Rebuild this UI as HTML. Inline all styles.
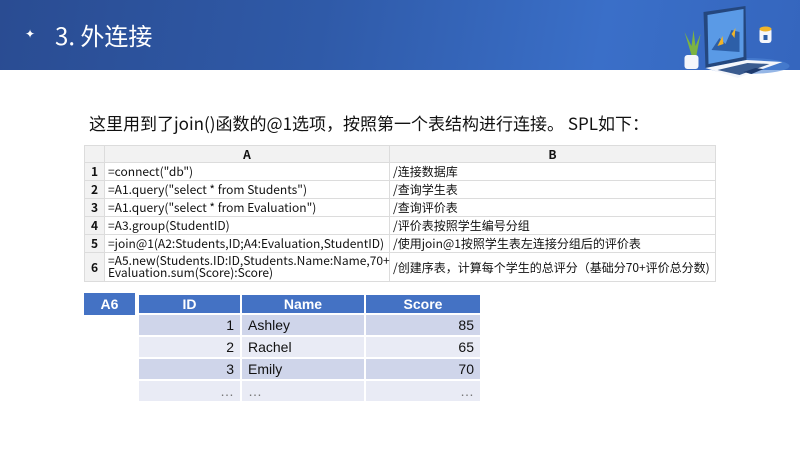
<!DOCTYPE html>
<html><head><meta charset="utf-8"><style>
*{margin:0;padding:0;box-sizing:border-box}
body{width:800px;height:450px;background:#fff;position:relative;overflow:hidden;font-family:"Liberation Sans","Noto Sans CJK SC",sans-serif}
.hdr{position:absolute;left:0;top:0;width:800px;height:70px;background:linear-gradient(100deg,#2a4c92 0%,#2f5aa8 40%,#3a6fc8 75%,#3566be 100%)}
.ttl{position:absolute;left:55px;top:17px;color:#fff;font-size:24px;font-family:"Noto Sans CJK SC",sans-serif}
.star{position:absolute;left:25px;top:27px;color:#fff;font-size:12px}
.intro{position:absolute;left:89px;top:110px;font-size:17px;font-family:"Noto Sans CJK SC",sans-serif;color:#111}
table{border-collapse:collapse;position:absolute}
.t1{left:84px;top:145px;width:632px;font-family:"Noto Sans CJK SC",sans-serif;font-size:12px;color:#111;table-layout:fixed}
.t1 td{border:1px solid #dcdcdc;padding:0 3px;height:18px;line-height:13px;white-space:nowrap;overflow:visible}
.t1 tr.h td{background:#f2f2f2;font-weight:bold;text-align:center;height:17px}
.t1 td.n{background:#f2f2f2;font-weight:bold;text-align:center;font-size:12px}
.a6{position:absolute;left:84px;top:293px;width:52px;height:22px;background:#4472c4;color:#fff;font-weight:bold;font-size:14px;text-align:center;line-height:22px;border-right:1px solid #fff}
.t2{left:137px;top:293px;width:345px;font-size:14px;color:#111}
.t2 td{border:2px solid #fff;height:22px;padding:0 6px}
.t2 tr.h td{background:#4472c4;color:#fff;font-weight:bold;text-align:center;height:20px}
.t2 tr.o td{background:#cfd5ea}
.t2 tr.e td{background:#e9ebf5}
.r{text-align:right}
</style></head><body>
<div class="hdr"></div>
<div class="star">✦</div>
<div class="ttl">3. 外连接</div>
<svg style="position:absolute;left:645px;top:0" width="155" height="78" viewBox="0 0 150 78">
<ellipse cx="100" cy="66" rx="42" ry="8" fill="#4f86d6" opacity=".6"/>
<rect x="37" y="55" width="14" height="14" rx="3" fill="#f4f6fb"/>
<path d="M44 55 L37 32 L44 46 L46 30 L48 46 L53 34 L49 55Z" fill="#7cb342"/>
<path d="M56 12 L98 6 L99 60 L58 68 Z" fill="#24477e"/>
<path d="M60 15 L96 9 L96 57 L61 64 Z" fill="#5a9ae6"/>
<path d="M64 50 L72 38 L78 44 L84 30 L92 32 L92 52 Z" fill="#2d5fa8"/>
<path d="M70 46 L75 36 L76 44Z M84 34 L88 28 L87 38Z" fill="#f0b429"/>
<path d="M58 68 L99 60 L135 62 L90 78 Z" fill="#f4f6fb"/>
<path d="M70 70 L100 63 L122 64 L92 75 Z" fill="#3a5b8f"/>
<path d="M96 72 L108 68 L116 69 L104 74Z" fill="#1e3b6e"/>
<rect x="112" y="28" width="12" height="15" rx="3" fill="#f4f6fb"/>
<ellipse cx="118" cy="29" rx="6" ry="2.5" fill="#f0b429"/>
<rect x="116" y="35" width="4" height="5" fill="#2d5fa8"/>
</svg>
<div class="intro">这里用到了join()函数的@1选项，按照第一个表结构进行连接。 SPL如下：</div>
<table class="t1">
<colgroup><col style="width:20px"><col style="width:285px"><col></colgroup>
<tr class="h"><td class="n"></td><td>A</td><td>B</td></tr>
<tr><td class="n">1</td><td>=connect("db")</td><td>/连接数据库</td></tr>
<tr><td class="n">2</td><td>=A1.query("select * from Students")</td><td>/查询学生表</td></tr>
<tr><td class="n">3</td><td>=A1.query("select * from Evaluation")</td><td>/查询评价表</td></tr>
<tr><td class="n">4</td><td>=A3.group(StudentID)</td><td>/评价表按照学生编号分组</td></tr>
<tr><td class="n">5</td><td>=join@1(A2:Students,ID;A4:Evaluation,StudentID)</td><td>/使用join@1按照学生表左连接分组后的评价表</td></tr>
<tr><td class="n" style="height:29px">6</td><td style="line-height:12px">=A5.new(Students.ID:ID,Students.Name:Name,70+<br>Evaluation.sum(Score):Score)</td><td>/创建序表，计算每个学生的总评分（基础分70+评价总分数)</td></tr>
</table>
<div class="a6">A6</div>
<table class="t2">
<tr class="h"><td style="width:103px">ID</td><td style="width:124px">Name</td><td>Score</td></tr>
<tr class="o"><td class="r">1</td><td>Ashley</td><td class="r">85</td></tr>
<tr class="e"><td class="r">2</td><td>Rachel</td><td class="r">65</td></tr>
<tr class="o"><td class="r">3</td><td>Emily</td><td class="r">70</td></tr>
<tr class="e"><td class="r" style="color:#777">…</td><td style="color:#777">…</td><td class="r" style="color:#777">…</td></tr>
</table>
</body></html>
